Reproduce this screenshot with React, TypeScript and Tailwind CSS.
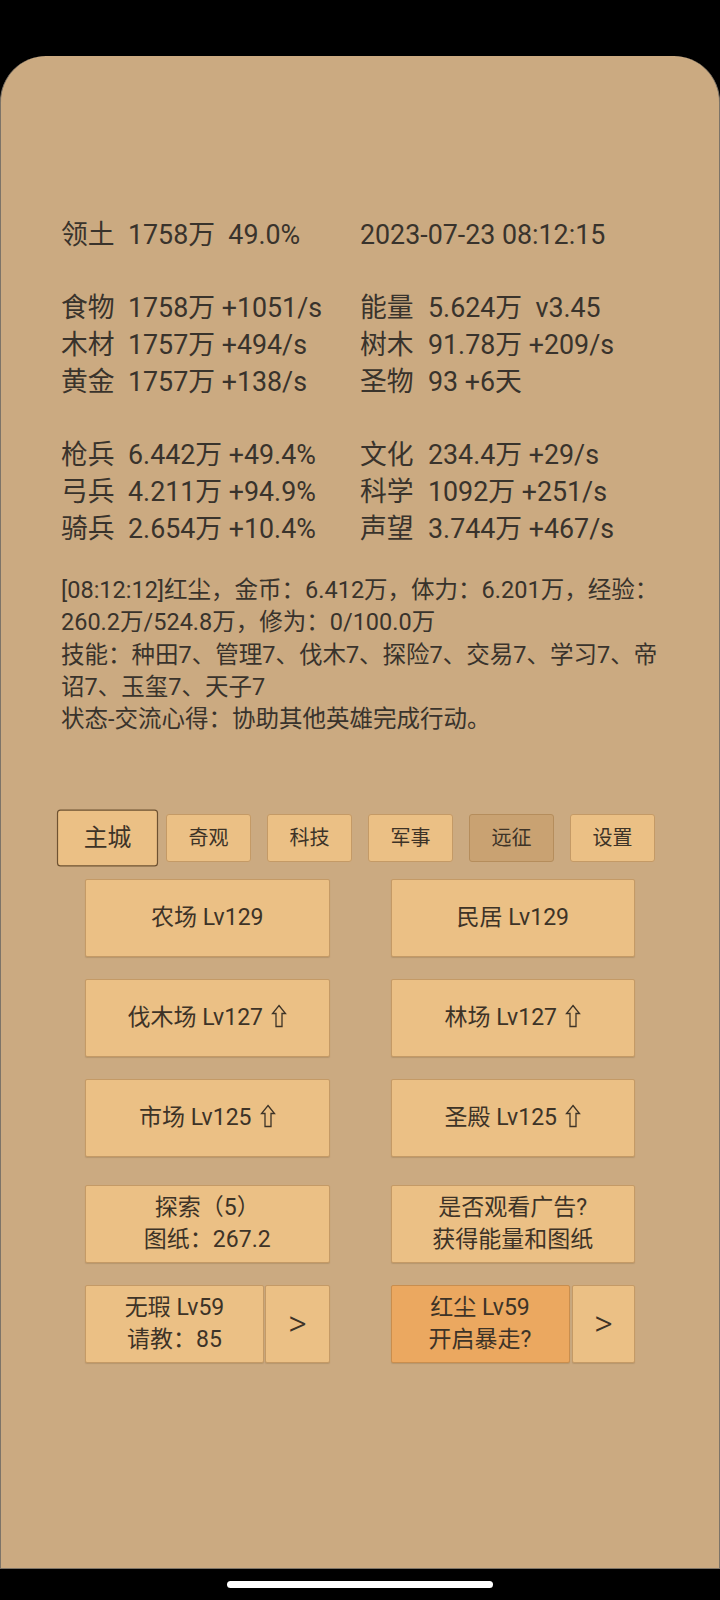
import React from "react";

const FONT = { fontFamily: 'Roboto, "Noto Sans CJK SC", sans-serif' };

function StatRow({ a, b, c, d }: { a: string; b: string; c: string; d: string }) {
  return (
    <div className="grid grid-cols-[67px_232px_68px_1fr] h-[36.7px] items-center whitespace-pre">
      <span>{a}</span>
      <span>{b}</span>
      <span>{c}</span>
      <span>{d}</span>
    </div>
  );
}

function Btn({ children, className = "" }: { children: React.ReactNode; className?: string }) {
  return (
    <div
      className={`flex flex-col items-center justify-center border border-[#c49a66] rounded-[2px] bg-[#ebc085] text-[#3d3327] text-[23px] leading-[32px] shadow-[0_1px_1px_rgba(120,90,50,0.25)] ${className}`}
    >
      {children}
    </div>
  );
}

function Up() {
  return (
    <svg width="16" height="24" viewBox="0 0 16 24" className="inline-block ml-[8px] align-[-3px]">
      <path d="M8 1.5 L14.5 9.5 L11 9.5 L11 22.5 L5 22.5 L5 9.5 L1.5 9.5 Z" fill="none" stroke="#3d3327" strokeWidth="1.3" strokeLinejoin="miter" />
    </svg>
  );
}

function Tab({ label, active, dark }: { label: string; active?: boolean; dark?: boolean }) {
  return (
    <div
      className={`w-[85px] h-[48px] flex items-center justify-center rounded-[3px] text-[20px] text-[#3d3327] border ${
        active ? "scale-[1.19] border-[#6e5232] bg-[#ebc085]" : dark ? "border-[#b58d5c] bg-[#c9a272]" : "border-[#c49a66] bg-[#ebc085]"
      }`}
    >
      {label}
    </div>
  );
}

export default function App() {
  return (
    <div className="w-[720px] h-[1600px] bg-black flex flex-col" style={FONT}>
      <div className="h-[56px] shrink-0" />
      <div className="h-[1513px] shrink-0 bg-[#cbaa81] rounded-t-[46px] border border-t-0 border-[#7d7468] flex flex-col">
        <div className="pt-[159px] pl-[60px] text-[26.8px] text-[#39332c]">
          <StatRow a="领土" b="1758万  49.0%" c="2023-07-23 08:12:15" d="" />
          <div className="h-[36.7px]" />
          <StatRow a="食物" b="1758万 +1051/s" c="能量" d="5.624万  v3.45" />
          <StatRow a="木材" b="1757万 +494/s" c="树木" d="91.78万 +209/s" />
          <StatRow a="黄金" b="1757万 +138/s" c="圣物" d="93 +6天" />
          <div className="h-[36.7px]" />
          <StatRow a="枪兵" b="6.442万 +49.4%" c="文化" d="234.4万 +29/s" />
          <StatRow a="弓兵" b="4.211万 +94.9%" c="科学" d="1092万 +251/s" />
          <StatRow a="骑兵" b="2.654万 +10.4%" c="声望" d="3.744万 +467/s" />
        </div>
        <div className="mt-[29px] pl-[60px] text-[23.5px] leading-[32.3px] text-[#39332c] whitespace-nowrap">
          <div>[08:12:12]红尘，金币：6.412万，体力：6.201万，经验：</div>
          <div>260.2万/524.8万，修为：0/100.0万</div>
          <div>技能：种田7、管理7、伐木7、探险7、交易7、学习7、帝</div>
          <div>诏7、玉玺7、天子7</div>
          <div>状态-交流心得：协助其他英雄完成行动。</div>
        </div>
        <div className="mt-[78px] pl-[64px] flex items-center gap-[16px]">
          <Tab label="主城" active />
          <Tab label="奇观" />
          <Tab label="科技" />
          <Tab label="军事" />
          <Tab label="远征" dark />
          <Tab label="设置" />
        </div>
        <div className="mt-[17px] px-[84px] grid grid-cols-2 gap-x-[61px] gap-y-[22px]">
          <Btn className="h-[78px]">农场 Lv129</Btn>
          <Btn className="h-[78px]">民居 Lv129</Btn>
          <Btn className="h-[78px]">
            <span>伐木场 Lv127<Up /></span>
          </Btn>
          <Btn className="h-[78px]">
            <span>林场 Lv127<Up /></span>
          </Btn>
          <Btn className="h-[78px]">
            <span>市场 Lv125<Up /></span>
          </Btn>
          <Btn className="h-[78px]">
            <span>圣殿 Lv125<Up /></span>
          </Btn>
        </div>
        <div className="mt-[28px] px-[84px] grid grid-cols-2 gap-x-[61px] gap-y-[22px]">
          <Btn className="h-[78px]">
            <span>探索（5）</span>
            <span>图纸：267.2</span>
          </Btn>
          <Btn className="h-[78px]">
            <span>是否观看广告?</span>
            <span>获得能量和图纸</span>
          </Btn>
          <div className="flex gap-[1px] h-[78px]">
            <Btn className="w-[179px]">
              <span>无瑕 Lv59</span>
              <span>请教：85</span>
            </Btn>
            <Btn className="flex-1 text-[36px] font-light">&gt;</Btn>
          </div>
          <div className="flex gap-[2px] h-[78px]">
            <Btn className="w-[179px] !bg-[#eba860] !border-[#c98e4e]">
              <span>红尘 Lv59</span>
              <span>开启暴走?</span>
            </Btn>
            <Btn className="flex-1 text-[36px] font-light">&gt;</Btn>
          </div>
        </div>
      </div>
      <div className="flex-1 flex items-start justify-center pt-[12px]">
        <div className="w-[266px] h-[7px] rounded-full bg-white" />
      </div>
    </div>
  );
}
